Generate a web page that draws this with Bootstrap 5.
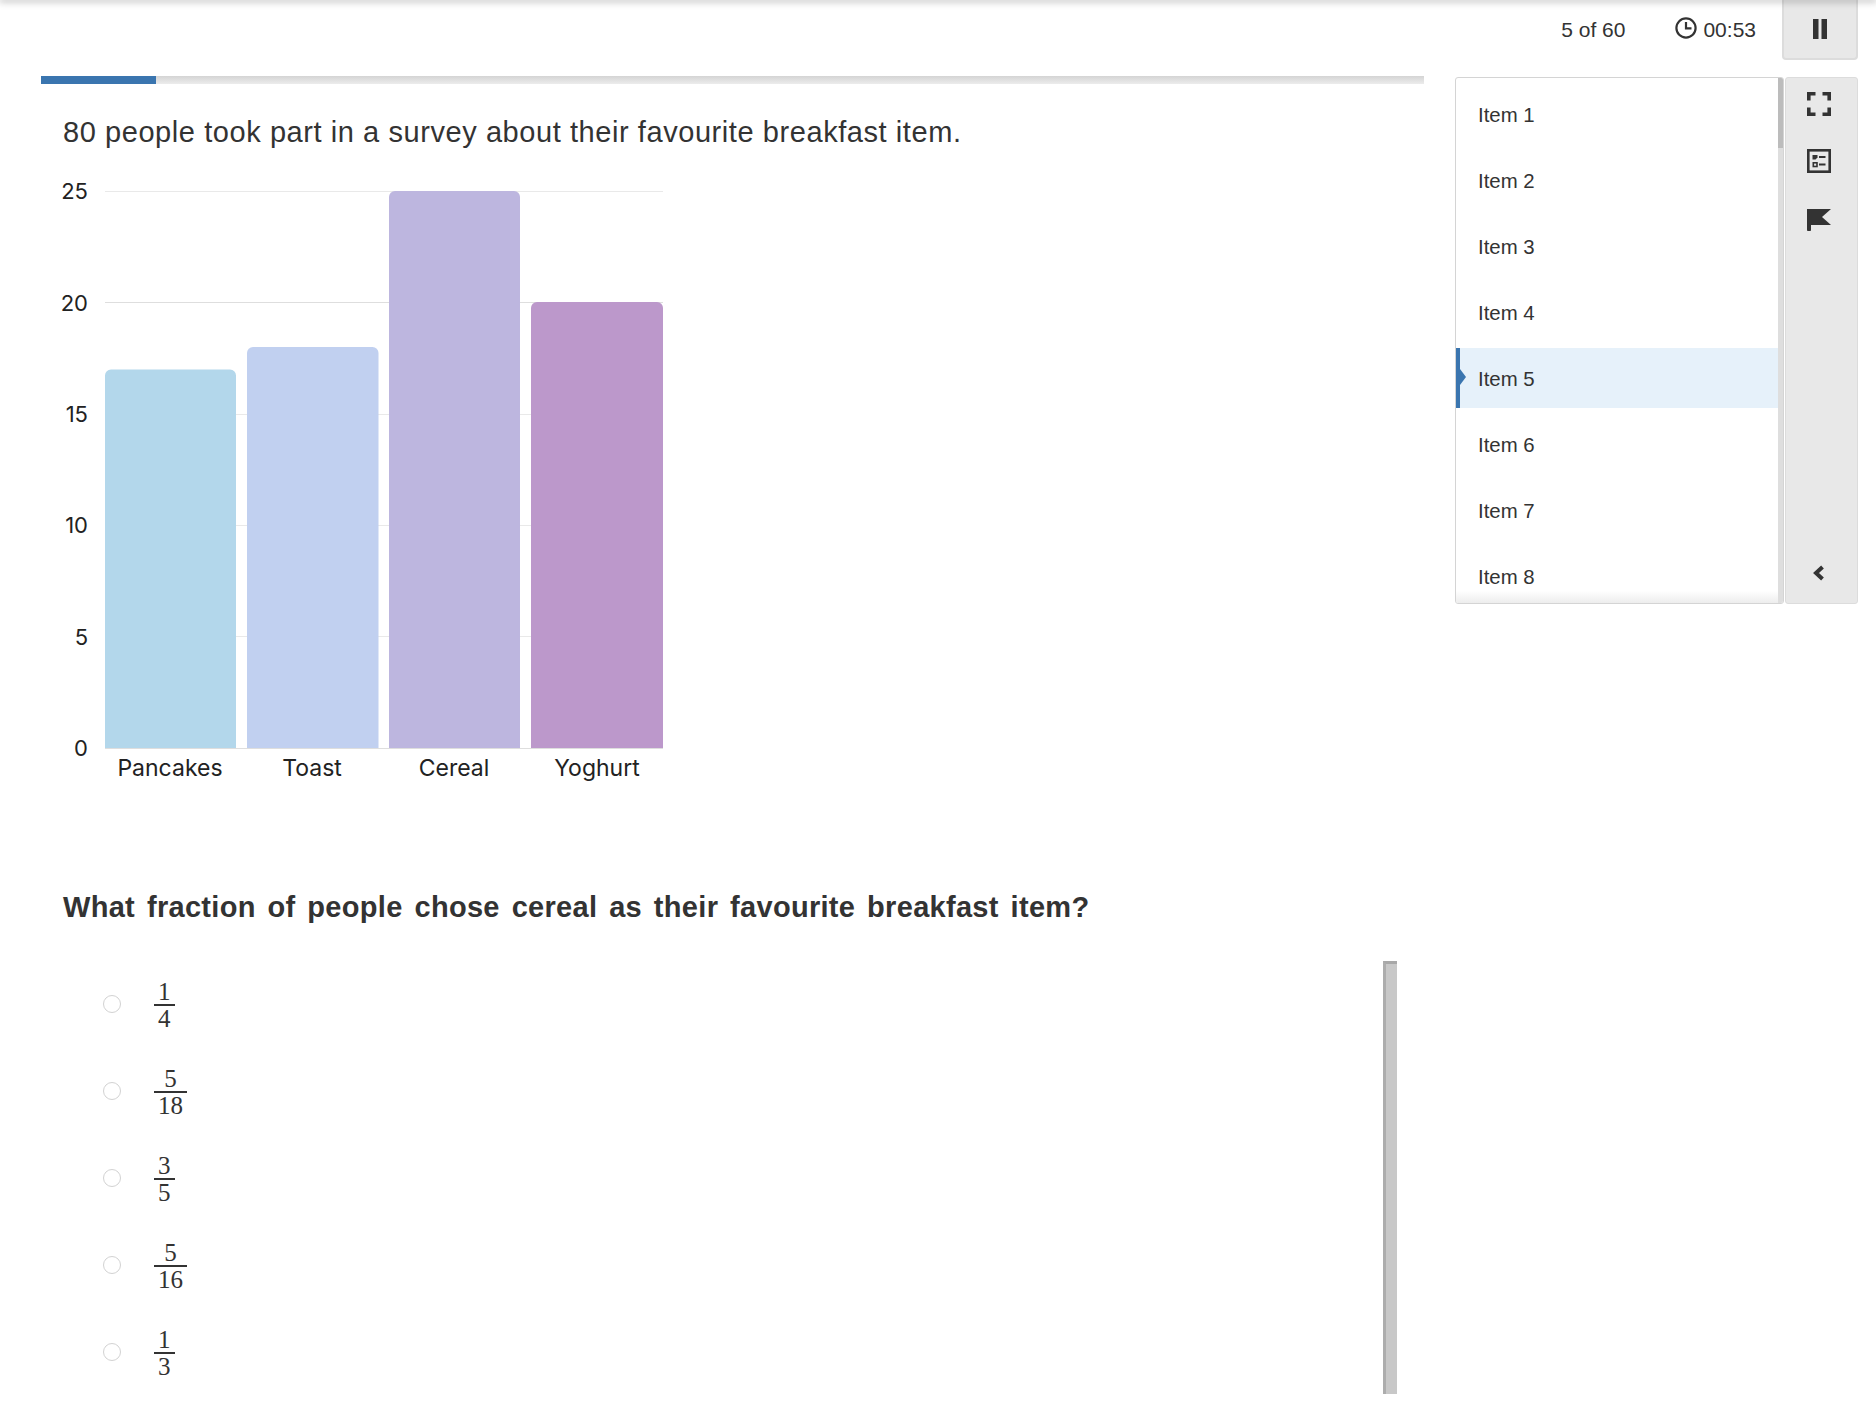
<!DOCTYPE html>
<html lang="en">
<head>
<meta charset="utf-8">
<title>Question 5 of 60</title>
<link href="https://cdn.jsdelivr.net/npm/bootstrap@5.3.0/dist/css/bootstrap.min.css" rel="stylesheet">
<style>
html,body{height:100%;}
body{font-family:"Liberation Sans",Arial,sans-serif;color:#333;background:#fff;overflow:hidden;}
.top-shade{height:0;box-shadow:0 0 7px 1px rgba(0,0,0,.55);position:relative;z-index:5;}
.head-bar{height:60px;padding-right:18px;font-size:21px;}
.count-txt{margin-right:50px;}
.timer-txt{margin-right:26px;gap:6px;}
.timer-txt svg{margin-bottom:4px;}
.pause-btn{width:76px;height:60px;background:#e8e8e8;border:2px solid #dcdcdc;border-top:0;border-radius:0 0 4px 4px;}
.main-zone{margin-top:16px;}
.left-col{margin-left:41px;width:1383px;}
.survey-track{height:8px;border-radius:0;background:linear-gradient(#d4d4d4,#ececec);}
.survey-fill{background:#3a75af;}
.stem{padding-left:22px;}
.stem-line{font-size:29px;line-height:36px;letter-spacing:.57px;margin:30px 0 0;}
.chart-svg{display:block;margin:20px 0 0 -8px;}
.chart-svg text{font-family:Inter,"Liberation Sans",sans-serif;fill:#222;}
.ask-line{font-size:29px;line-height:36px;font-weight:700;letter-spacing:.3px;word-spacing:3.5px;margin:89px 0 36px;}
.opt-row{height:87px;}
.opt-radio.form-check-input{width:18px;height:18px;margin:0 33px 2px 40px;border:1.5px solid #d2d2d2;flex:none;}
.frac-box{font-family:"Liberation Serif","Times New Roman",serif;font-size:25px;line-height:24px;color:#333;}
.frac-top{border-bottom:2px solid #333;padding:1px 4px 0;text-align:center;}
.frac-bot{padding:1px 4px 0;text-align:center;}
.gutter-strip{width:14px;height:433px;margin-right:27px;background:#c8c8c8;border-left:3px solid #adadad;border-top:3px solid #a8a8a8;}
.nav-panel{margin-left:31px;margin-top:1px;width:329px;height:527px;border:1.5px solid #d4d4d4;border-radius:3px;background:#fff;overflow:hidden;position:relative;}
.nav-list{padding:6px 5px 0 0;gap:6px;}
.nav-row{height:60px;flex:none;padding:2px 0 0 22px;font-size:20.4px;background:transparent;border:0;border-radius:0;color:#333;position:relative;}
.nav-row.is-current{background:#e6f1fa;border-left:4px solid #3a75af;padding-left:18px;}
.nav-row.is-current::before{content:"";position:absolute;left:0;top:21px;border-left:6px solid #3a75af;border-top:8px solid transparent;border-bottom:8px solid transparent;}
.nav-scroll{position:absolute;right:0;top:0;bottom:0;width:5px;background:#dedede;}
.nav-thumb{height:70px;background:#bcbcbc;}
.nav-fade{position:absolute;left:0;right:5px;bottom:0;height:12px;background:linear-gradient(rgba(235,235,235,0),rgba(235,235,235,.9));}
.tool-rail{margin-left:1px;margin-top:1px;width:73px;height:527px;background:#e8e8e8;border:1.5px solid #dcdcdc;border-radius:3px;padding:14px 5px 22px 0;}
.tool-rail svg{display:block;}
.tool-gap-a{margin-top:33px;}
.tool-gap-b{margin-top:34px;}
</style>
</head>
<body>
<div class="top-shade"></div>
<header class="head-bar d-flex justify-content-end align-items-start">
  <div class="count-txt d-flex align-items-center h-100">5 of 60</div>
  <div class="timer-txt d-flex align-items-center h-100">
    <svg width="22" height="22" viewBox="0 0 22 22" aria-hidden="true"><circle cx="11" cy="11" r="9.6" fill="none" stroke="#333" stroke-width="2.2"/><path d="M11 5v6.400h5.500" fill="none" stroke="#333" stroke-width="2.2"/></svg>
    <span>00:53</span>
  </div>
  <div class="pause-btn d-flex align-items-center justify-content-center">
    <svg width="14" height="20" viewBox="0 0 14 20" aria-hidden="true"><rect width="5.500" height="20" fill="#333"/><rect x="8.500" width="5.500" height="20" fill="#333"/></svg>
  </div>
</header>
<main class="main-zone d-flex align-items-start">
  <section class="left-col">
    <div class="progress survey-track"><div class="progress-bar survey-fill" style="width:8.33%"></div></div>
    <div class="stem">
      <p class="stem-line">80 people took part in a survey about their favourite breakfast item.</p>
      <svg class="chart-svg" width="628" height="630" viewBox="55 170 628 630" role="img" aria-label="Bar chart">
        <g stroke="#e9e9e9" stroke-width="1">
          <path d="M105 191.500H663"/><path d="M105 302.500H663" stroke="#dedede"/><path d="M105 414.500H663"/><path d="M105 525.500H663"/><path d="M105 636.500H663"/><path d="M105 748.500H663" stroke="#dedede"/>
        </g>
        <path d="M105 748V375.500a6 6 0 0 1 6-6H230a6 6 0 0 1 6 6V748Z" fill="#b3d7eb"/>
        <path d="M247 748V353a6 6 0 0 1 6-6H372.500a6 6 0 0 1 6 6V748Z" fill="#c1d0f0"/>
        <path d="M389 748V197a6 6 0 0 1 6-6H514a6 6 0 0 1 6 6V748Z" fill="#bdb6df"/>
        <path d="M531 748V308a6 6 0 0 1 6-6H657a6 6 0 0 1 6 6V748Z" fill="#bc98cb"/>
        <g font-size="22" text-anchor="end">
          <text x="88" y="199">25</text><text x="88" y="311">20</text><text x="88" y="422">15</text><text x="88" y="533">10</text><text x="88" y="645">5</text><text x="88" y="756">0</text>
        </g>
        <g font-size="23" text-anchor="middle">
          <text x="170" y="776">Pancakes</text><text x="312" y="776">Toast</text><text x="454" y="776">Cereal</text><text x="597" y="776">Yoghurt</text>
        </g>
      </svg>
      <p class="ask-line">What fraction of people chose cereal as their favourite breakfast item?</p>
      <div class="d-flex justify-content-between align-items-start">
        <div class="flex-grow-1">
          <div class="opt-row d-flex align-items-center"><input class="form-check-input opt-radio" type="radio" name="ans" aria-label="one quarter"><div class="frac-box d-inline-flex flex-column"><span class="frac-top">1</span><span class="frac-bot">4</span></div></div>
          <div class="opt-row d-flex align-items-center"><input class="form-check-input opt-radio" type="radio" name="ans" aria-label="five eighteenths"><div class="frac-box d-inline-flex flex-column"><span class="frac-top">5</span><span class="frac-bot">18</span></div></div>
          <div class="opt-row d-flex align-items-center"><input class="form-check-input opt-radio" type="radio" name="ans" aria-label="three fifths"><div class="frac-box d-inline-flex flex-column"><span class="frac-top">3</span><span class="frac-bot">5</span></div></div>
          <div class="opt-row d-flex align-items-center"><input class="form-check-input opt-radio" type="radio" name="ans" aria-label="five sixteenths"><div class="frac-box d-inline-flex flex-column"><span class="frac-top">5</span><span class="frac-bot">16</span></div></div>
          <div class="opt-row d-flex align-items-center"><input class="form-check-input opt-radio" type="radio" name="ans" aria-label="one third"><div class="frac-box d-inline-flex flex-column"><span class="frac-top">1</span><span class="frac-bot">3</span></div></div>
        </div>
        <div class="gutter-strip"></div>
      </div>
    </div>
  </section>
  <aside class="nav-panel">
    <div class="list-group nav-list">
      <div class="list-group-item nav-row d-flex align-items-center">Item 1</div>
      <div class="list-group-item nav-row d-flex align-items-center">Item 2</div>
      <div class="list-group-item nav-row d-flex align-items-center">Item 3</div>
      <div class="list-group-item nav-row d-flex align-items-center">Item 4</div>
      <div class="list-group-item nav-row is-current d-flex align-items-center">Item 5</div>
      <div class="list-group-item nav-row d-flex align-items-center">Item 6</div>
      <div class="list-group-item nav-row d-flex align-items-center">Item 7</div>
      <div class="list-group-item nav-row d-flex align-items-center">Item 8</div>
    </div>
    <div class="nav-fade"></div>
    <div class="nav-scroll"><div class="nav-thumb"></div></div>
  </aside>
  <aside class="tool-rail d-flex flex-column align-items-center">
    <svg width="24" height="24" viewBox="0 0 24 24" aria-hidden="true"><path d="M1.800 8.500V1.800H8.500M15.500 1.800h6.700V8.500M22.200 15.500v6.700H15.500M8.500 22.200H1.800V15.500" fill="none" stroke="#333" stroke-width="3.600"/></svg>
    <svg class="tool-gap-a" width="24" height="24" viewBox="0 0 24 24" aria-hidden="true"><rect x="1.300" y="1.300" width="21.400" height="21.400" fill="none" stroke="#333" stroke-width="2.600"/><path d="M5.500 6h5v2.500l-2 2h-3z" fill="#333"/><path d="M12 8h6.500M12 15.500h6.500" stroke="#333" stroke-width="2.200"/><rect x="6.300" y="13.800" width="3.700" height="3.700" fill="none" stroke="#333" stroke-width="1.600"/></svg>
    <svg class="tool-gap-b" width="24" height="24" viewBox="0 0 24 24" aria-hidden="true"><path d="M0 2H24L15 10 24 18H4V22.500a2 2 0 0 1-4 0Z" fill="#333"/></svg>
    <svg class="mt-auto" width="12" height="16" viewBox="0 0 12 16" aria-hidden="true"><path d="M9.500 2 3 8l6.500 6" fill="none" stroke="#333" stroke-width="4"/></svg>
  </aside>
</main>
</body>
</html>
